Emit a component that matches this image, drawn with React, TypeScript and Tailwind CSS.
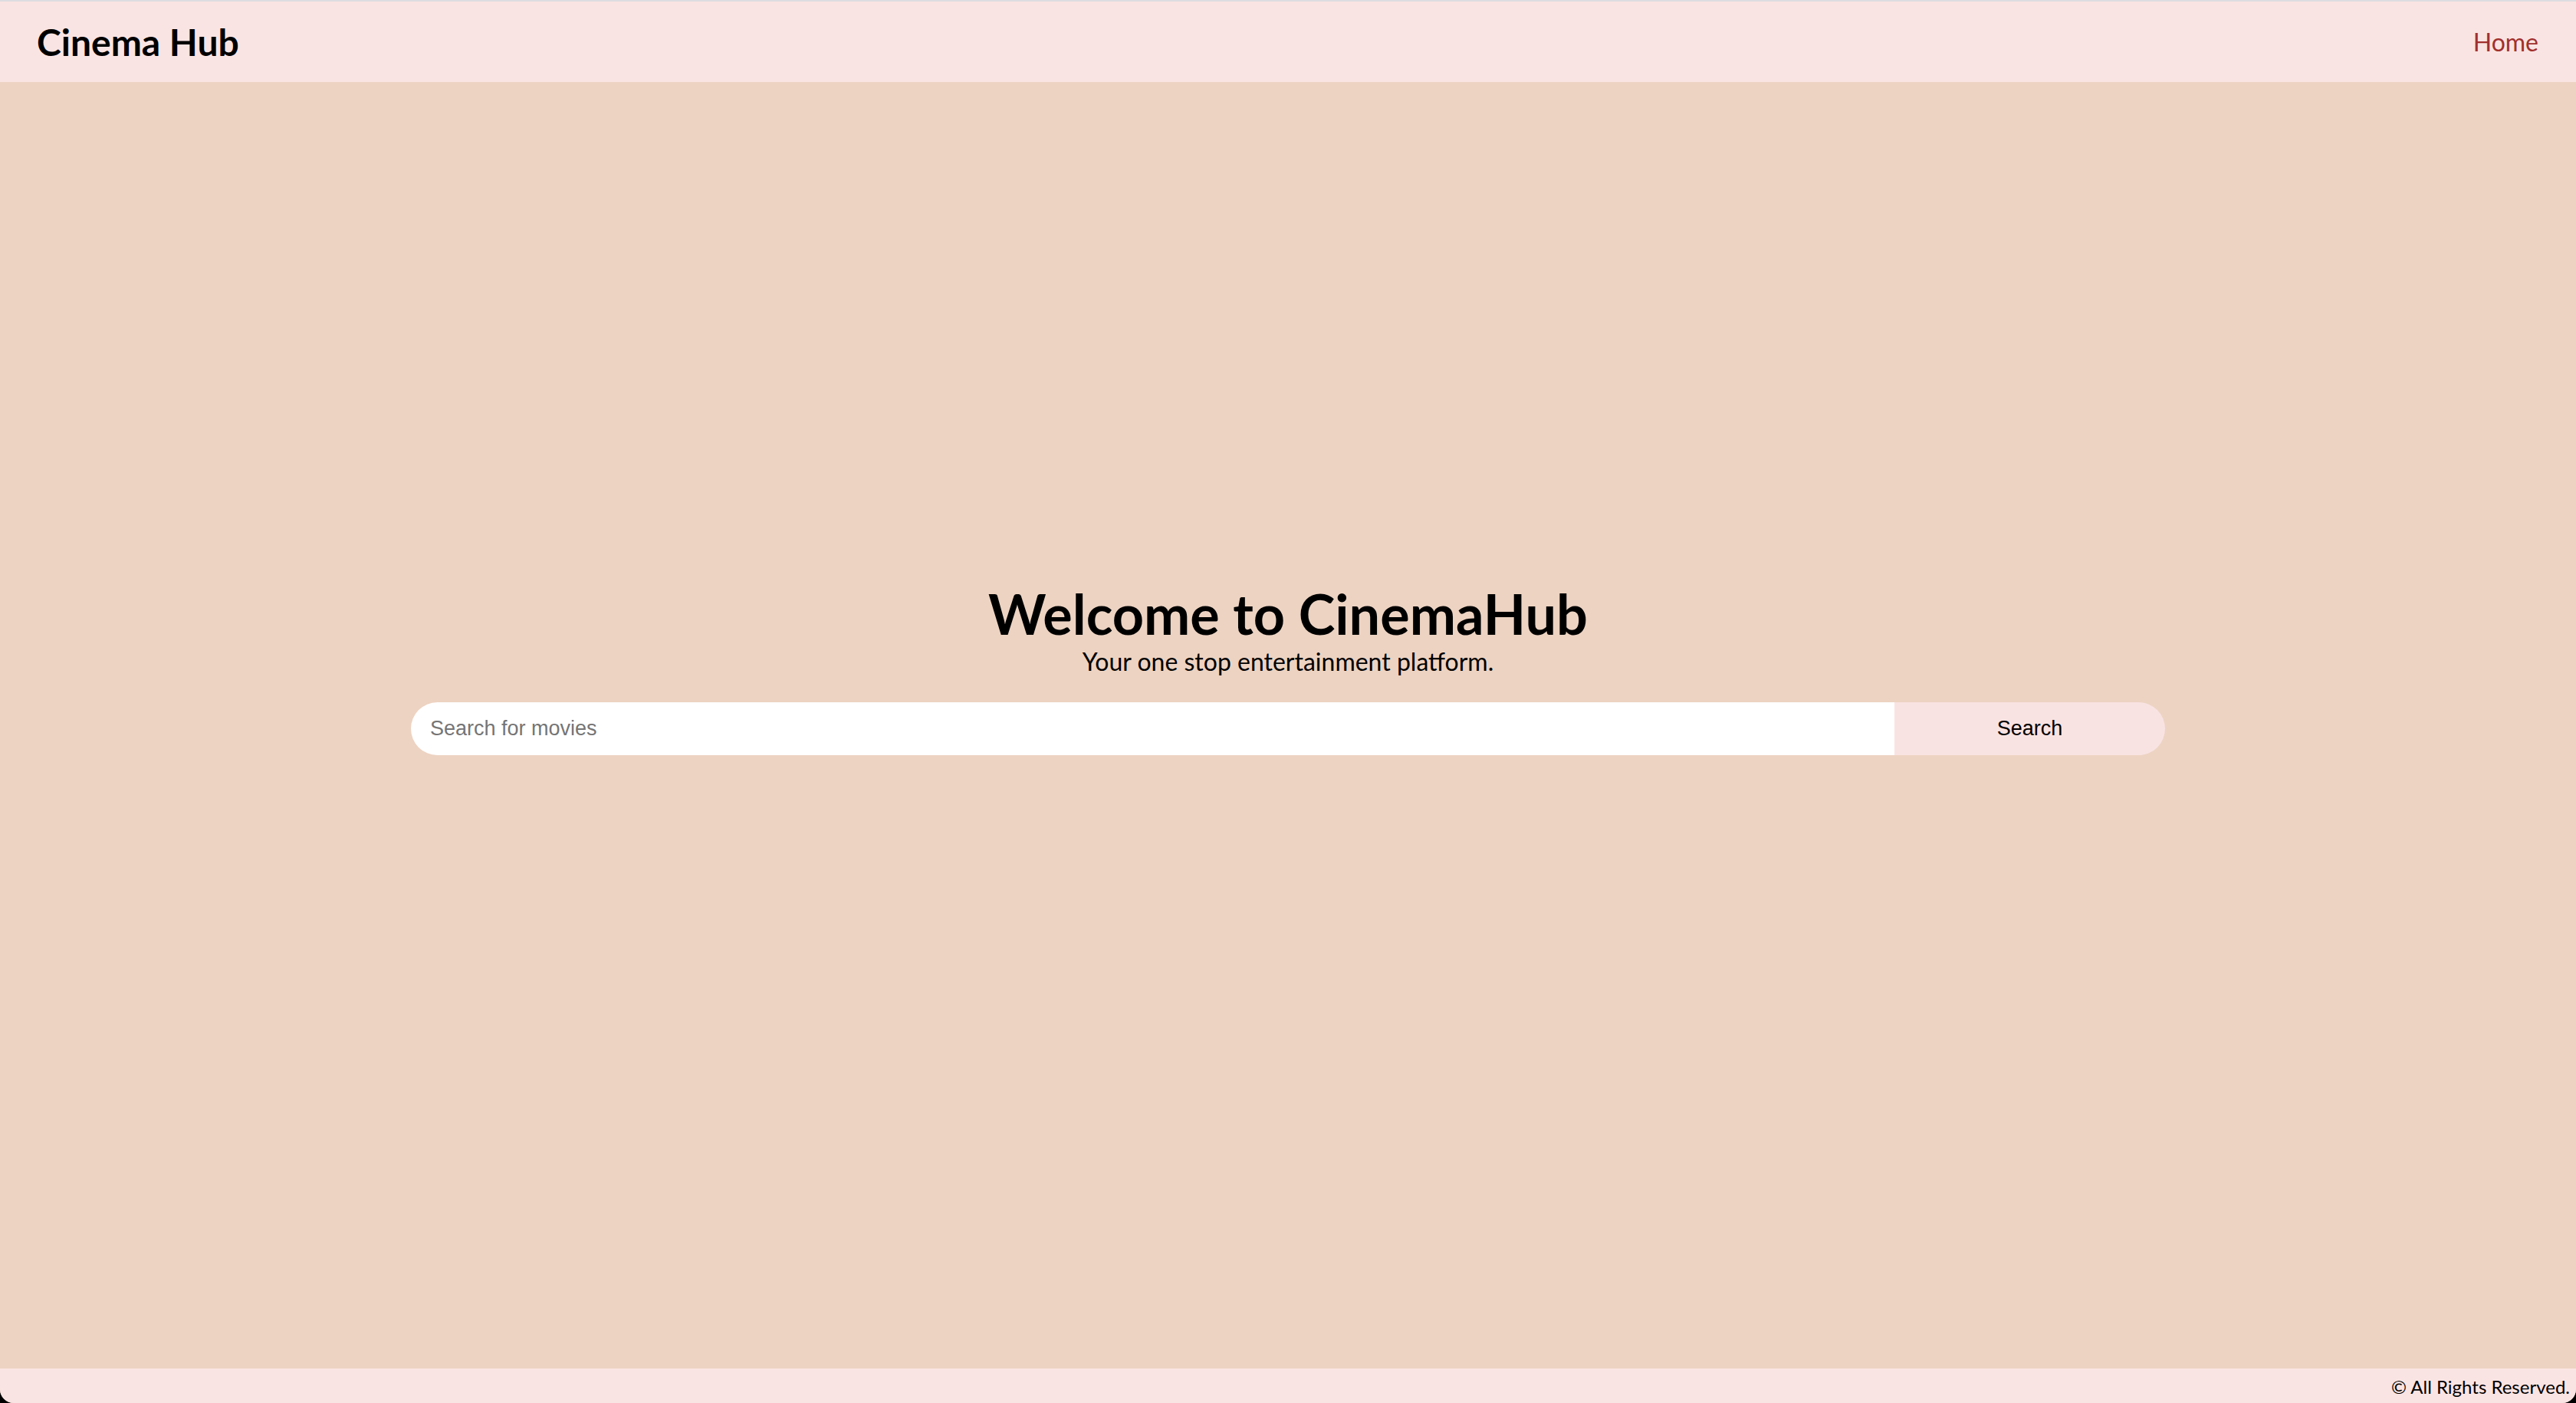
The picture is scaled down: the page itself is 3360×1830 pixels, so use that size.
import { useState } from 'react';

const Header = () => (
  <header className="h-[107px] shrink-0 border-t-2 border-[#dcdce2] bg-[#fae4e3] flex items-center justify-between pl-[48px] pr-[49px]">
    <h1 className="font-['Lato',sans-serif] text-[48px] font-bold text-black leading-none">Cinema Hub</h1>
    <nav>
      <a href="#" className="font-['Lato',sans-serif] text-[32px] text-[#a0302d]">Home</a>
    </nav>
  </header>
);

const SearchBar = () => {
  const [query, setQuery] = useState('');
  return (
    <form
      className="flex w-[2288px] h-[69px] mt-[33px] font-['Liberation_Sans',Arial,sans-serif]"
      onSubmit={(e) => e.preventDefault()}
    >
      <input
        value={query}
        onChange={(e) => setQuery(e.target.value)}
        placeholder="Search for movies"
        className="flex-1 h-full bg-white rounded-l-full pl-[25px] text-[27px] text-black placeholder:text-[#757575] outline-none"
      />
      <button
        type="submit"
        className="w-[353px] h-full bg-[#f9e3e2] rounded-r-full text-[27px] text-black"
      >
        Search
      </button>
    </form>
  );
};

export default function App() {
  return (
    <div className="bg-black">
      <div className="h-[1830px] flex flex-col bg-[#edd3c2] rounded-b-[18px] overflow-hidden font-['Lato',sans-serif]">
        <Header />

        {/* hero */}
        <main className="flex-1 flex flex-col items-center justify-center pb-[150px]">
          <h2 className="text-[72px] font-bold text-black leading-[1.2]">Welcome to CinemaHub</h2>
          <p className="text-[32px] text-black leading-[1.25]">Your one stop entertainment platform.</p>
          <SearchBar />
        </main>

        <footer className="h-[45px] shrink-0 bg-[#fae4e3] flex items-center justify-end pr-[8px] pt-[2px]">
          <p className="text-[24px] text-black">© All Rights Reserved.</p>
        </footer>
      </div>
    </div>
  );
}
